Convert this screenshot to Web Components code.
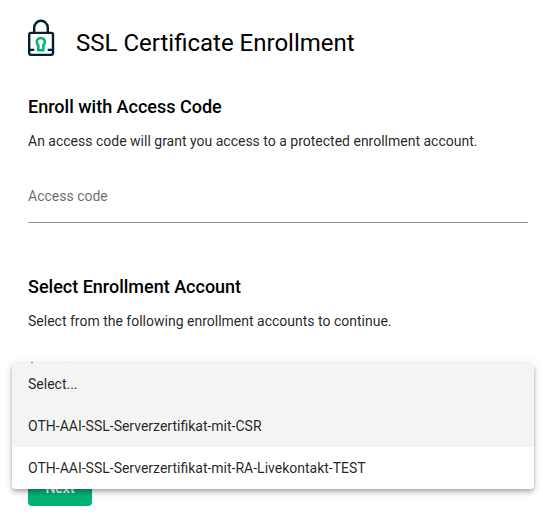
<!DOCTYPE html>
<html lang="en">
<head>
<meta charset="utf-8">
<title>SSL Certificate Enrollment</title>
<style>
html, body { margin: 0; background: #fff; }
body { font-family: Roboto, sans-serif; height: 530px; overflow: hidden; }
</style>
</head>
<body>
<enroll-page></enroll-page>
<script>
const define = (name, html) => {
  const template = document.createElement('template');
  template.innerHTML = html;
  customElements.define(name, class extends HTMLElement {
    constructor() {
      super();
      this.attachShadow({ mode: 'open' }).append(template.content.cloneNode(true));
    }
  });
};

define('lock-icon', `
<style>:host { display: block; width: 28px; height: 38px; } svg { display: block; }</style>
<svg width="28" height="38" viewBox="0 0 28 38" fill="none" stroke="#03202f" stroke-width="2.4" stroke-linecap="round" stroke-linejoin="round">
  <path d="M7.2 13V8.8a6.8 7 0 0 1 13.6 0v4.2"/>
  <rect x="2.2" y="13.9" width="23.8" height="22" rx="1.8"/>
  <path d="M2.8 30.8H6.4M21.6 30.8H25.4" stroke-width="2.2"/>
  <path d="M11.3 31.3V26.2A4 4.1 0 1 1 16.3 26.2V31.3Z" stroke="#00b373" stroke-width="2.5"/>
</svg>`);

define('page-header', `
<style>
:host { display: flex; height: 78px; padding: 19px 0 0 27px; box-sizing: border-box; gap: 21px; }
h1 { margin: 8px 0 0; font-size: 24px; line-height: 32px; font-weight: 400; color: #000; white-space: nowrap; }
</style>
<lock-icon></lock-icon><h1><slot></slot></h1>`);

define('form-section', `
<style>
:host { display: block; padding: 0 15px 0 28px; }
h2 { margin: 0; padding-top: 17px; font-size: 18px; line-height: 24px; font-weight: 500; color: #000; }
p { margin: 12px 0 0; font-size: 14px; line-height: 20px; color: rgba(0,0,0,.87); }
</style>
<h2><slot name="title"></slot></h2><p><slot name="text"></slot></p><slot></slot>`);

define('text-field', `
<style>
:host { display: block; box-sizing: border-box; height: 72px; padding-top: 35px; border-bottom: 1px solid #949494; font-size: 14px; line-height: 20px; color: rgba(0,0,0,.6); }
</style><slot></slot>`);

define('primary-button', `
<style>
:host { display: block; width: 64px; height: 36px; border-radius: 4px; background: #00b373; color: #fff; text-align: center; font-size: 14px; line-height: 36px; font-weight: 500; }
</style><slot></slot>`);

define('option-item', `
<style>
:host { display: block; height: 42px; padding: 0 16px; font-size: 14px; line-height: 42px; color: rgba(0,0,0,.87); white-space: nowrap; }
:host([active]) { background: #f4f4f4; }
</style><slot></slot>`);

define('option-menu', `
<style>
:host { position: absolute; left: 12px; top: 363px; width: 522px; border-radius: 4px; overflow: hidden; background: #fff;
  box-shadow: 0 2px 4px -1px rgba(0,0,0,.2), 0 4px 5px 0 rgba(0,0,0,.14), 0 1px 10px 0 rgba(0,0,0,.12); }
</style><slot></slot>`);

define('enroll-page', `
<style>
:host { display: block; position: relative; height: 530px; overflow: hidden; }
.second { padding-top: 35px; }
.select { height: 108px; margin-top: 31px; box-sizing: border-box;
  background: linear-gradient(#20c3a4, #20c3a4) 3px 0 / 2px 1px no-repeat, linear-gradient(#d2dce0, #d2dce0) 37px 0 / 1px 1px no-repeat; }
primary-button { margin-left: 28px; }
</style>
<page-header>SSL Certificate Enrollment</page-header>
<form-section>
  <span slot="title">Enroll with Access Code</span>
  <span slot="text">An access code will grant you access to a protected enrollment account.</span>
  <text-field>Access code</text-field>
</form-section>
<form-section class="second">
  <span slot="title">Select Enrollment Account</span>
  <span slot="text">Select from the following enrollment accounts to continue.</span>
  <div class="select"></div>
</form-section>
<primary-button>Next</primary-button>
<option-menu>
  <option-item active>Select...</option-item>
  <option-item active>OTH-AAI-SSL-Serverzertifikat-mit-CSR</option-item>
  <option-item>OTH-AAI-SSL-Serverzertifikat-mit-RA-Livekontakt-TEST</option-item>
</option-menu>`);
</script>
</body>
</html>
